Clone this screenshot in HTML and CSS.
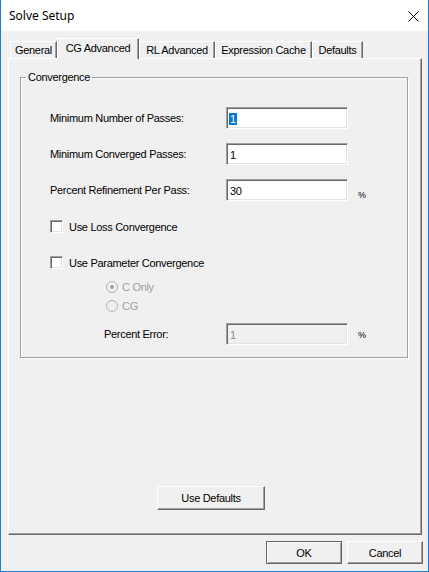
FILE: index.html
```html
<!DOCTYPE html>
<html>
<head>
<meta charset="utf-8">
<title>Solve Setup</title>
<link rel="stylesheet" href="styles.css">
</head>
<body>
<div class="window">
  <div class="titlebar">
    <span class="title">Solve Setup</span>
    <svg class="close" width="11" height="11" viewBox="0 0 11 11"><path d="M0.5 0.5 L10.5 10.5 M10.5 0.5 L0.5 10.5" stroke="#000" stroke-width="1" fill="none"/></svg>
  </div>
  <div class="tabs">
    <div class="tab w-general">General</div>
    <div class="tab active w-cg">CG Advanced</div>
    <div class="tab w-rl">RL Advanced</div>
    <div class="tab w-expr">Expression Cache</div>
    <div class="tab w-def">Defaults</div>
  </div>
  <div class="panel">
    <div class="group">
      <span class="group-title">Convergence</span>
      <div class="row first">
        <span class="lbl">Minimum Number of Passes:</span>
        <div class="field"><span class="sel">1</span></div>
      </div>
      <div class="row">
        <span class="lbl">Minimum Converged Passes:</span>
        <div class="field"><span class="val">1</span></div>
      </div>
      <div class="row">
        <span class="lbl">Percent Refinement Per Pass:</span>
        <div class="field"><span class="val">30</span></div>
        <span class="pct low">%</span>
      </div>
      <div class="check-row first-check">
        <span class="box"></span><span class="check-lbl">Use Loss Convergence</span>
      </div>
      <div class="check-row second-check">
        <span class="box"></span><span class="check-lbl">Use Parameter Convergence</span>
      </div>
      <div class="radio-row r1">
        <svg class="radio" width="12" height="12" viewBox="0 0 12 12"><circle cx="6" cy="6" r="5.5" fill="#f0f0f0" stroke="#b4b4b4"/><circle cx="6" cy="6" r="2" fill="#a0a0a0"/></svg>
        <span class="radio-lbl">C Only</span>
      </div>
      <div class="radio-row r2">
        <svg class="radio" width="12" height="12" viewBox="0 0 12 12"><circle cx="6" cy="6" r="5.5" fill="#f0f0f0" stroke="#b4b4b4"/></svg>
        <span class="radio-lbl">CG</span>
      </div>
      <div class="row err-row">
        <span class="lbl err-lbl">Percent Error:</span>
        <div class="field disabled"><span class="val dis">1</span></div>
        <span class="pct mid">%</span>
      </div>
    </div>
    <button class="btn defaults">Use Defaults</button>
  </div>
  <div class="actions">
    <button class="btn ok">OK</button>
    <button class="btn cancel">Cancel</button>
  </div>
</div>
</body>
</html>
```

FILE: styles.css
```css
body {
  margin: 0;
}

.window {
  width: 429px;
  height: 572px;
  box-sizing: border-box;
  border: 1px solid #1883d7;
  border-top: 0;
  background: #f0f0f0;
  font-family: "Liberation Sans", Arial, sans-serif;
  font-size: 11px;
  letter-spacing: -0.3px;
  color: #000;
  display: flex;
  flex-direction: column;
}

.titlebar {
  height: 31px;
  flex: none;
  background: #fff;
  display: flex;
  align-items: center;
  justify-content: space-between;
  padding: 0 9px 0 8px;
}

.title {
  font-family: "Noto Sans", sans-serif;
  font-size: 12px;
  letter-spacing: 0;
}

.close {
  display: block;
  margin-top: 1px;
}

/* tabs */
.tabs {
  display: flex;
  align-items: flex-end;
  height: 20px;
  margin: 7px 0 0 9px;
  flex: none;
}

.tab {
  box-sizing: border-box;
  height: 17px;
  border-top: 1px solid #fff;
  border-left: 1px solid #fff;
  border-right: 1px solid #696969;
  box-shadow: inset -1px 0 0 #a0a0a0;
  text-align: center;
  line-height: 16px;
}

.tab.active {
  height: 21px;
  margin-bottom: -1px;
  position: relative;
  z-index: 1;
  background: #f0f0f0;
  line-height: 19px;
}

.w-general { width: 47px; }
.w-cg { width: 82px; }
.w-rl { width: 76px; }
.w-expr { width: 97px; }
.w-def { width: 51px; }

/* panel */
.panel {
  box-sizing: border-box;
  height: 477px;
  margin: 0 6px 0 7px;
  border-top: 1px solid #fff;
  border-left: 1px solid #fff;
  border-right: 1px solid #696969;
  border-bottom: 1px solid #696969;
  box-shadow: inset -1px -1px 0 #a0a0a0;
  display: flex;
  flex-direction: column;
  align-items: flex-start;
  flex: none;
}

.group {
  box-sizing: border-box;
  width: 388px;
  margin: 18px 0 0 11px;
  border: 1px solid #a0a0a0;
  box-shadow: 1px 1px 0 #fff, inset 1px 1px 0 #fff;
  padding: 0 0 12px 29px;
  display: flex;
  flex-direction: column;
}

.group-title {
  align-self: flex-start;
  margin: -8px 0 0 -24px;
  padding: 0 2px;
  height: 14px;
  line-height: 14px;
  background: #f0f0f0;
}

.row {
  display: flex;
  align-items: center;
  height: 22px;
  margin-top: 14px;
}

.row.first {
  margin-top: 23px;
}

.lbl {
  width: 176px;
  flex: none;
}

.field {
  box-sizing: border-box;
  width: 122px;
  height: 22px;
  flex: none;
  background: #fff;
  border-top: 1px solid #a0a0a0;
  border-left: 1px solid #a0a0a0;
  border-right: 1px solid #fff;
  border-bottom: 1px solid #fff;
  box-shadow: inset 1px 1px 0 #696969, inset -1px -1px 0 #e3e3e3;
  padding: 2px 0 0 2px;
  display: flex;
  align-items: center;
}

.field.disabled {
  background: #f0f0f0;
}

.sel {
  background: #0078d7;
  color: #fff;
  line-height: 12px;
  padding: 0 1px;
  margin-top: -1px;
}

.val {
  padding-left: 1px;
  margin-top: -1px;
}

.val.dis {
  color: #8a8a8a;
}

.pct {
  margin-left: 10px;
  font-size: 9px;
  line-height: 9px;
}

.pct.low {
  align-self: flex-end;
  margin-bottom: 1px;
}

.pct.mid {
  margin-top: 2px;
}

.check-row {
  display: flex;
  align-items: center;
  height: 13px;
}

.first-check {
  margin-top: 19px;
}

.second-check {
  margin-top: 23px;
}

.box {
  box-sizing: border-box;
  width: 13px;
  height: 13px;
  flex: none;
  background: #fff;
  border-top: 1px solid #a0a0a0;
  border-left: 1px solid #a0a0a0;
  border-right: 1px solid #fff;
  border-bottom: 1px solid #fff;
  box-shadow: inset 1px 1px 0 #696969, inset -1px -1px 0 #e3e3e3;
}

.check-lbl {
  margin-left: 6px;
}

.radio-row {
  display: flex;
  align-items: center;
  height: 12px;
  margin-left: 56px;
}

.r1 {
  margin-top: 12px;
}

.r2 {
  margin-top: 7px;
}

.radio {
  display: block;
  flex: none;
}

.radio-lbl {
  margin-left: 4px;
  color: #a0a0a0;
}

.err-row {
  margin-top: 11px;
}

.err-lbl {
  width: 122px;
  margin-left: 54px;
}

/* buttons */
.btn {
  box-sizing: border-box;
  font-family: "Liberation Sans", Arial, sans-serif;
  font-size: 11px;
  letter-spacing: -0.3px;
  color: #000;
  background: #f0f0f0;
  border-top: 1px solid #fff;
  border-left: 1px solid #fff;
  border-right: 1px solid #696969;
  border-bottom: 1px solid #696969;
  box-shadow: inset -1px -1px 0 #a0a0a0;
  padding: 0;
  margin: 0;
}

.defaults {
  width: 108px;
  height: 24px;
  margin: 128px 0 0 148px;
}

.actions {
  display: flex;
  justify-content: flex-end;
  gap: 5px;
  padding-right: 5px;
  margin-top: 6px;
}

.ok,
.cancel {
  width: 76px;
  height: 23px;
}

.ok {
  border: 1px solid #646464;
  box-shadow: inset 1px 1px 0 #fff, inset -1px -1px 0 #a0a0a0;
}
```
